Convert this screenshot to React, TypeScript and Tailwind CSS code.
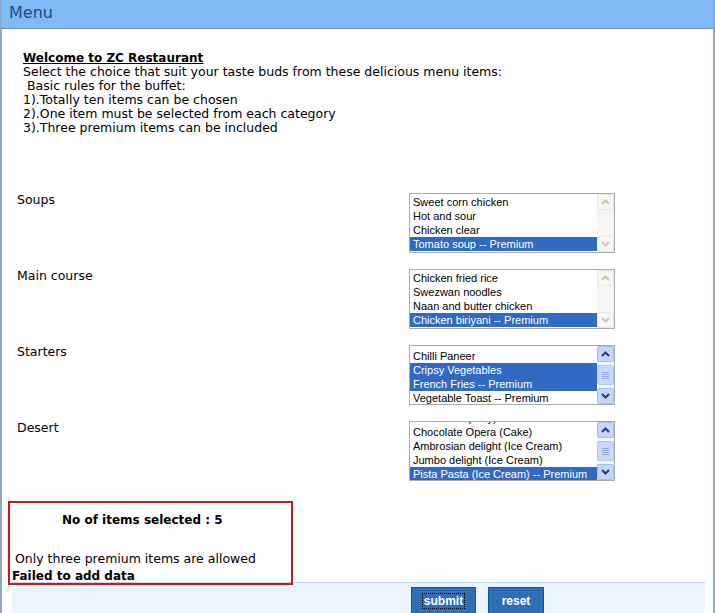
import React from 'react';

type Cat = {
  label: string;
  items: string[];
  selected: number[];
  hidden?: string;
  active?: boolean;
};

const cats: Cat[] = [
  {
    label: 'Soups',
    items: ['Sweet corn chicken', 'Hot and sour', 'Chicken clear', 'Tomato soup -- Premium'],
    selected: [3],
  },
  {
    label: 'Main course',
    items: ['Chicken fried rice', 'Swezwan noodles', 'Naan and butter chicken', 'Chicken biriyani -- Premium'],
    selected: [3],
  },
  {
    label: 'Starters',
    items: ['Chilli Paneer', 'Cripsy Vegetables', 'French Fries -- Premium', 'Vegetable Toast -- Premium'],
    selected: [1, 2],
    hidden: 'Gobi Manchurian',
    active: true,
  },
  {
    label: 'Desert',
    items: ['Chocolate Opera (Cake)', 'Ambrosian delight (Ice Cream)', 'Jumbo delight (Ice Cream)', 'Pista Pasta (Ice Cream) -- Premium'],
    selected: [3],
    hidden: 'Fruit salad (Jelly)',
    active: true,
  },
];

const Chevron = ({ up, active }: { up: boolean; active?: boolean }) => (
  <svg width="9" height="6" viewBox="0 0 9 6">
    <path
      d={up ? 'M1 5 L4.5 1.5 L8 5' : 'M1 1 L4.5 4.5 L8 1'}
      fill="none"
      stroke={active ? '#1d3d8a' : '#c9c7ba'}
      strokeWidth="2"
    />
  </svg>
);

const Scrollbar = ({ active }: { active?: boolean }) => {
  const btn = active
    ? 'h-[16px] flex items-center justify-center rounded-[2px] border border-[#a9bff0] bg-[#c6d6fb]'
    : 'h-[16px] flex items-center justify-center rounded-[2px] border border-[#ebe9e0] bg-[#f8f7f2]';
  return (
    <div className={`w-[17px] flex flex-col justify-between ${active ? 'bg-[#f3f5fc]' : 'bg-[#f6f5f0]'}`}>
      <div className={btn}>
        <Chevron up active={active} />
      </div>
      {active && (
        <div className="flex-1 my-[3px] rounded-[2px] border border-[#b4c8f4] bg-[#c9d8fc] flex flex-col items-center justify-center gap-[1px]">
          <div className="w-[7px] h-px bg-[#8fa8e0]" />
          <div className="w-[7px] h-px bg-[#8fa8e0]" />
          <div className="w-[7px] h-px bg-[#8fa8e0]" />
          <div className="w-[7px] h-px bg-[#8fa8e0]" />
        </div>
      )}
      <div className={btn}>
        <Chevron up={false} active={active} />
      </div>
    </div>
  );
};

const ListBox = ({ cat }: { cat: Cat }) => (
  <div className="w-[206px] h-[60px] border border-[#a5acb2] bg-white flex">
    <div className="flex-1 overflow-hidden font-['Liberation_Sans',Arial,sans-serif] text-[11px] leading-[14px] text-black">
      <div className="pt-px">
        {cat.hidden && <div className="px-[3px] -mt-[12px] whitespace-nowrap">{cat.hidden}</div>}
        {cat.items.map((it, i) => (
          <div
            key={it}
            className={`px-[3px] h-[14px] whitespace-nowrap ${cat.selected.includes(i) ? 'bg-[#316ac5] text-white' : ''}`}
          >
            {it}
          </div>
        ))}
      </div>
    </div>
    <Scrollbar active={cat.active} />
  </div>
);

export default function App() {
  return (
    <div className="w-[715px] h-[613px] overflow-hidden bg-white font-['DejaVu_Sans',Verdana,sans-serif] text-black border-l-2 border-l-[#8ca9c9] border-r-2 border-r-[#8ca9c9] flex flex-col">
      {/* header */}
      <div className="h-[29px] shrink-0 bg-[#7fb9f6] border-b border-b-[#5c8fc6] pl-[7px] pt-[1px]">
        <span className="text-[16px] leading-[20px] text-[#1b4a86]">Menu</span>
      </div>

      {/* intro */}
      <div className="pl-[21px] pt-[22px] text-[12.5px] leading-[14px]">
        <div className="font-bold underline text-[12px]">Welcome to ZC Restaurant</div>
        <div>Select the choice that suit your taste buds from these delicious menu items:</div>
        <div>&nbsp;Basic rules for the buffet:</div>
        <div>1).Totally ten items can be chosen</div>
        <div>2).One item must be selected from each category</div>
        <div>3).Three premium items can be included</div>
      </div>

      {/* categories */}
      <div className="mt-[58px] flex flex-col gap-[16px] pl-[15px] pr-[98px]">
        {cats.map((c) => (
          <div key={c.label} className="flex justify-between">
            <div className="text-[12.5px] leading-[14px]">{c.label}</div>
            <ListBox cat={c} />
          </div>
        ))}
      </div>

      {/* status box */}
      <div className="mt-[20px] ml-[6px] w-[285px] h-[84px] shrink-0 border-2 border-[#d0141c] text-[12px] leading-[14px] relative z-10">
        <div className="font-bold pl-[52px] pt-[10px]">No of items selected : 5</div>
        <div className="pl-[5px] mt-[25px] text-[12.5px]">Only three premium items are allowed</div>
        <div className="font-bold pl-[2px] mt-[3px]">Failed to add data</div>
      </div>

      {/* footer */}
      <div className="-mt-[3px] ml-[10px] mr-[8px] flex-1 bg-[#ebf4fd] border-t border-t-[#c4d6ea] flex pl-[399px] pt-[4px] gap-[12px]">
        <button className="w-[65px] h-[28px] bg-[#2f6db5] border border-[#1f4f8c] text-white font-bold text-[12px] font-['Liberation_Sans',Arial,sans-serif] flex items-center justify-center">
          <span className="outline outline-1 outline-dotted outline-black px-[1px] leading-[14px]">submit</span>
        </button>
        <button className="w-[56px] h-[28px] bg-[#2f6db5] border border-[#1f4f8c] text-white font-bold text-[12px] font-['Liberation_Sans',Arial,sans-serif]">
          reset
        </button>
      </div>
    </div>
  );
}
